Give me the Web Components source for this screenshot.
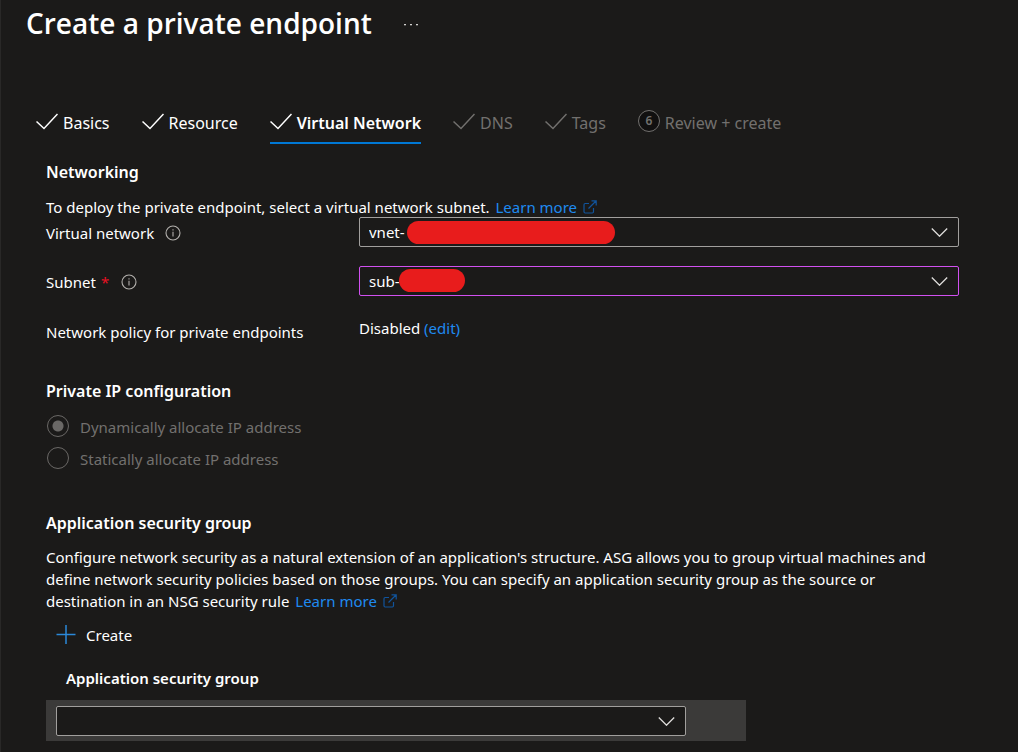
<!DOCTYPE html>
<html lang="en">
<head>
<meta charset="utf-8">
<meta name="viewport" content="width=device-width, initial-scale=1">
<title>Create a private endpoint</title>
<style>
  html { background: #1b1a19; }
  body {
    margin: 0;
    min-height: 100vh;
    box-sizing: border-box;
    border-left: 1px solid #292827;
    background: #1b1a19;
    color: #ffffff;
    font: 15px/22px "Noto Sans", "Open Sans", sans-serif;
    --link: #1f8af0;
    --link-icon: #11549c;
    --border: #a19f9d;
    --muted: #72706e;
    --surface: #1b1a19;
  }
</style>
</head>
<body>
<endpoint-page></endpoint-page>

<template id="t-page">
  <style>
    :host { display: block; }
    main { padding: 17px 59px 10px 45px; }
    section { display: block; }
    .fields { display: grid; gap: 19px; }
    .ip { margin-top: 37px; }
    .asg { margin-top: 43px; }
    p { margin: 0; max-width: 900px; }
    .lead { margin-top: 13px; margin-bottom: -1px; }
    .detail { margin-top: 12px; }
  </style>
  <blade-header>Create a private endpoint</blade-header>
  <step-nav>
    <step-tab state="done">Basics</step-tab>
    <step-tab state="done">Resource</step-tab>
    <step-tab state="current">Virtual Network</step-tab>
    <step-tab state="pending">DNS</step-tab>
    <step-tab state="pending">Tags</step-tab>
    <step-tab state="pending" number="6">Review + create</step-tab>
  </step-nav>
  <main>
    <section>
      <section-title>Networking</section-title>
      <p class="lead">To deploy the private endpoint, select a virtual network subnet. <external-link>Learn more</external-link></p>
      <div class="fields">
        <picker-field label="Virtual network" value="vnet-" info mask="long"></picker-field>
        <picker-field label="Subnet" value="sub-" info required mask="short"></picker-field>
        <value-field label="Network policy for private endpoints" action="(edit)">Disabled</value-field>
      </div>
    </section>
    <section class="ip">
      <section-title>Private IP configuration</section-title>
      <ip-options></ip-options>
    </section>
    <section class="asg">
      <section-title>Application security group</section-title>
      <p class="detail">Configure network security as a natural extension of an application's structure. ASG allows you to group virtual machines and define network security policies based on those groups. You can specify an application security group as the source or destination in an NSG security rule <external-link>Learn more</external-link></p>
      <create-command>Create</create-command>
      <group-table></group-table>
    </section>
  </main>
</template>

<template id="t-header">
  <style>
    :host { display: flex; align-items: center; gap: 30px; padding: 4px 25px 0; }
    h1 { margin: 0; font-family: "Open Sans", "Noto Sans", sans-serif; font-size: 28px; line-height: 38px; font-weight: 600; }
    button { display: flex; padding: 4px 0; border: 0; background: none; color: #d2d0ce; }
  </style>
  <h1><slot></slot></h1>
  <button type="button" aria-label="More actions">
    <svg width="16" height="8" viewBox="0 0 16 8" fill="currentColor"><rect x="2" y="5" width="2" height="1.300"/><rect x="8" y="5" width="2" height="1.300"/><rect x="14" y="5" width="2" height="1.300"/></svg>
  </button>
</template>

<template id="t-nav">
  <style>
    :host { display: block; padding: 62px 35px 0; }
    nav { display: flex; flex-wrap: wrap; gap: 0 32px; }
  </style>
  <nav aria-label="Steps"><slot></slot></nav>
</template>

<template id="t-tab">
  <style>
    :host { display: block; font-size: 16px; color: #ffffff; }
    :host([state="pending"]) { color: var(--muted); }
    :host([state="current"]) { font-weight: 600; }
    button {
      display: flex; align-items: center; gap: 5px;
      padding: 4px 0 8px; border: 0; border-bottom: 2px solid transparent;
      background: none; color: inherit; font: inherit; white-space: nowrap;
    }
    :host([state="current"]) button { border-color: #0078d4; }
    svg { display: block; }
    .text { padding-top: 4px; line-height: 22px; }
    .num {
      box-sizing: border-box; width: 22px; height: 22px; border: 1px solid currentColor; border-radius: 50%;
      background: #111010; font-size: 12px; line-height: 20px; font-weight: 600; text-align: center;
    }
    [hidden] { display: none; }
  </style>
  <button type="button">
    <svg class="tick" width="22" height="22" viewBox="0 0 22 22" fill="none" stroke="currentColor" stroke-width="1.5"><path d="M.5 11.500 8 18.500 21.500 4"/></svg>
    <span class="num" hidden></span>
    <span class="text"><slot></slot></span>
  </button>
</template>

<template id="t-title">
  <style>
    :host { display: block; }
    h2 { margin: 0; font-size: 16px; line-height: 22px; font-weight: 600; }
  </style>
  <h2><slot></slot></h2>
</template>

<template id="t-link">
  <style>
    :host { display: inline-block; margin-left: 2px; white-space: nowrap; }
    a { color: var(--link); text-decoration: none; }
    svg { margin-left: 2px; vertical-align: -1px; color: var(--link-icon); }
  </style>
  <a href="#"><slot></slot> <svg width="14" height="14" viewBox="0 0 14 14" fill="none" stroke="currentColor" stroke-width="1.2"><path d="M6 3.5H2.2A1.2 1.2 0 0 0 1 4.700V11.800A1.200 1.200 0 0 0 2.200 13H9.300A1.200 1.200 0 0 0 10.500 11.800V8M5.500 8.500 13 1M8.500.8H13.200V5.500"/></svg></a>
</template>

<template id="t-field">
  <style>
    :host { display: grid; grid-template-columns: 313px minmax(0, 1fr); align-items: center; }
    .name { display: flex; align-items: center; padding-top: 2px; }
    .star { margin-left: 5px; color: #e81123; }
    button { display: flex; margin-left: 11px; padding: 0; border: 0; background: none; color: #b3b0ad; }
    .star + button { margin-left: 12px; }
    .box { position: relative; }
    .mask { position: absolute; border-radius: 12px; background: #e81c1c; height: 23px; }
    .mask.long { left: 48px; top: 4px; width: 208px; }
    .mask.short { left: 40px; top: 3px; width: 66px; }
  </style>
  <div class="name"><label for="pick"></label></div>
  <div class="box"></div>
</template>

<template id="t-value">
  <style>
    :host { display: grid; grid-template-columns: 313px minmax(0, 1fr); align-items: start; }
    .name { padding-top: 6px; }
    .value { padding-top: 2px; }
    a { color: var(--link); text-decoration: none; }
  </style>
  <div class="name"></div>
  <div class="value"><slot></slot> <a href="#"></a></div>
</template>

<template id="t-ip">
  <style>
    :host { display: block; }
    fieldset { display: grid; gap: 10px; margin: 13px 0 0; padding: 0 0 0 1px; border: 0; color: var(--muted); }
    label { display: flex; align-items: center; gap: 11px; }
    input {
      appearance: none; box-sizing: border-box; flex: none; width: 22px; height: 22px; margin: 0;
      border: 1px solid #6a6866; border-radius: 50%;
    }
    input:checked { background: radial-gradient(circle, #6a6866 5px, transparent 6px); }
    span { padding-top: 2px; line-height: 20px; }
  </style>
  <fieldset disabled aria-label="Private IP configuration">
    <label><input type="radio" name="allocation" checked><span>Dynamically allocate IP address</span></label>
    <label><input type="radio" name="allocation"><span>Statically allocate IP address</span></label>
  </fieldset>
</template>

<template id="t-create">
  <style>
    :host { display: block; padding: 12px 10px 0; }
    button { display: flex; align-items: center; gap: 10px; padding: 0; border: 0; background: none; color: inherit; font: inherit; }
    svg { color: #2b88d8; }
  </style>
  <button type="button"><svg width="20" height="20" viewBox="0 0 20 20" stroke="currentColor" stroke-width="1.5"><path d="M.5 9.500H19.500M10 0V19"/></svg><slot></slot></button>
</template>

<template id="t-group">
  <style>
    :host { display: block; margin-top: 12px; max-width: 700px; }
    table { width: 100%; border-collapse: collapse; }
    th { padding: 9px 20px 11px; font-weight: 600; text-align: left; line-height: 22px; }
    td { padding: 6px 60px 5px 10px; background: #3b3a39; }
  </style>
  <table>
    <thead><tr><th scope="col">Application security group</th></tr></thead>
    <tbody><tr><td></td></tr></tbody>
  </table>
</template>

<template id="t-select">
  <style>
    .pick { display: grid; }
    .pick > * { grid-area: 1 / 1; }
    select {
      appearance: none; box-sizing: border-box; width: 100%; height: 30px; margin: 0; padding: 0 40px 0 9px;
      border: 1px solid var(--border); border-radius: 2px; background: var(--surface);
      color: #ffffff; font: inherit; line-height: 22px;
    }
    .accent select { border-color: #d150f0; }
    .pick svg { place-self: center end; margin: 1px 11px 0 0; color: #e1dfdd; pointer-events: none; }
  </style>
  <div class="pick">
    <select id="pick"><option></option></select>
    <svg width="17" height="9" viewBox="0 0 17 9" fill="none" stroke="currentColor" stroke-width="1.3"><path d="M.8.5 8.500 8.200 16.200.5"/></svg>
  </div>
</template>

<script>
  const stamp = id => document.getElementById(id).content.cloneNode(true);

  class Templated extends HTMLElement {
    constructor() {
      super();
      this.attachShadow({ mode: 'open' }).append(stamp(this.constructor.template));
    }
    $(selector) { return this.shadowRoot.querySelector(selector); }
  }

  const simple = {
    'blade-header': 't-header', 'step-nav': 't-nav', 'section-title': 't-title',
    'external-link': 't-link', 'ip-options': 't-ip', 'create-command': 't-create'
  };
  for (const [name, template] of Object.entries(simple)) {
    customElements.define(name, class extends Templated { static template = template; });
  }

  customElements.define('step-tab', class extends Templated {
    static template = 't-tab';
    connectedCallback() {
      const number = this.getAttribute('number');
      if (number) {
        this.$('.tick').remove();
        this.$('.num').hidden = false;
        this.$('.num').textContent = number;
      }
      if (this.getAttribute('state') === 'current') this.$('button').setAttribute('aria-current', 'step');
    }
  });

  customElements.define('picker-field', class extends Templated {
    static template = 't-field';
    connectedCallback() {
      this.$('label').textContent = this.getAttribute('label');
      const name = this.$('.name');
      if (this.hasAttribute('required')) {
        name.insertAdjacentHTML('beforeend', '<span class="star">*</span>');
      }
      if (this.hasAttribute('info')) {
        name.insertAdjacentHTML('beforeend', '<button type="button" aria-label="Information"><svg width="16" height="16" viewBox="0 0 16 16" fill="none" stroke="currentColor" stroke-width="1.1"><circle cx="8" cy="8" r="7"/><path d="M8 6.800V11.500M8 4.300V5.500"/></svg></button>');
      }
      const box = this.$('.box');
      box.append(stamp('t-select'));
      this.$('option').textContent = this.getAttribute('value');
      this.$('.pick').classList.toggle('accent', this.hasAttribute('required'));
      const mask = document.createElement('span');
      mask.className = 'mask ' + this.getAttribute('mask');
      box.append(mask);
    }
  });

  customElements.define('value-field', class extends Templated {
    static template = 't-value';
    connectedCallback() {
      this.$('.name').textContent = this.getAttribute('label');
      this.$('a').textContent = this.getAttribute('action');
    }
  });

  customElements.define('group-table', class extends Templated {
    static template = 't-group';
    connectedCallback() {
      this.$('td').append(stamp('t-select'));
      this.$('select').setAttribute('aria-label', 'Application security group');
    }
  });

  customElements.define('endpoint-page', class extends Templated { static template = 't-page'; });
</script>
</body>
</html>
